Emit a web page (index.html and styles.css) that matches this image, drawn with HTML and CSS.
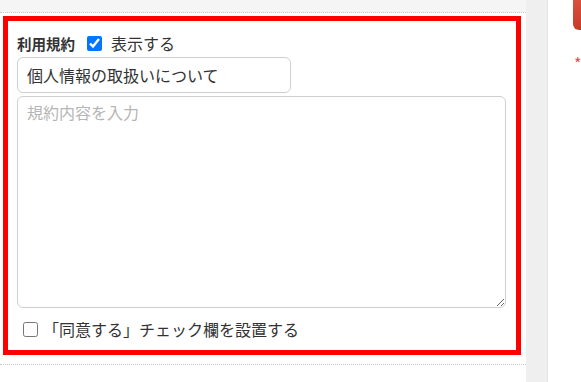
FILE: index.html
```html
<!DOCTYPE html>
<html lang="ja">
<head>
  <meta charset="utf-8">
  <title>利用規約設定</title>
  <link rel="stylesheet" href="styles.css">
</head>
<body>

  <div class="layout">
    <!-- Form column -->
    <div class="main">
      <div class="prev-row"></div>

      <div class="terms-box">
        <div class="terms-head">
          <span class="terms-label">利用規約</span>
          <label class="check">
            <input type="checkbox" checked>
            <span>表示する</span>
          </label>
        </div>
        <input type="text" class="title-input" value="個人情報の取扱いについて">
        <textarea class="body-input" placeholder="規約内容を入力"></textarea>
        <label class="check agree">
          <input type="checkbox">
          <span>「同意する」チェック欄を設置する</span>
        </label>
      </div>

      <div class="next-row"></div>
    </div>

    <div class="gutter"></div>

    <!-- Side panel -->
    <div class="side">
      <div class="side-btn"></div>
      <div class="side-note">*</div>
    </div>
  </div>

</body>
</html>
```

FILE: styles.css
```css
body {
  margin: 0;
  padding: 0;
  font-family: "Noto Sans CJK JP", "Noto Sans", sans-serif;
  color: #333;
  background: #fff;
}

.layout {
  display: flex;
  height: 382px;
  overflow: hidden;
}

/* Form column */
.main {
  width: 526px;
  flex-shrink: 0;
}

.prev-row {
  height: 12px;
  background-color: #f5f5f5;
  border-bottom: 1px dotted #c8c8c8;
}

.terms-box {
  margin: 3px 5px 0 3px;
  border: 5px solid #ff0000;
  padding: 10px 10px 8px 9px;
  display: flex;
  flex-direction: column;
}

.terms-head {
  display: flex;
  align-items: center;
  height: 24px;
}

.terms-label {
  font-size: 14.5px;
  font-weight: bold;
  margin-right: 12px;
}

.check {
  display: flex;
  align-items: center;
  font-size: 16px;
  color: #333;
}

.check input {
  width: 15px;
  height: 15px;
  margin: 0 9px 0 0;
}

.title-input {
  margin-top: 2px;
  width: 274px;
  height: 36px;
  box-sizing: border-box;
  padding: 0 9px;
  border: 1px solid #cfcfcf;
  border-radius: 6px;
  font-family: inherit;
  font-size: 16px;
  color: #333;
}

.body-input {
  margin-top: 3px;
  height: 212px;
  box-sizing: border-box;
  padding: 3px 9px;
  border: 1px solid #cfcfcf;
  border-radius: 6px;
  font-family: inherit;
  font-size: 16px;
  color: #333;
  resize: vertical;
}

.body-input::placeholder {
  color: #b5b5b5;
}

.agree {
  margin-top: 8px;
  height: 26px;
  padding-left: 6px;
}

.agree input {
  margin-right: 5px;
}

.next-row {
  height: 9px;
  border-bottom: 1px dotted #c8c8c8;
}

/* Gutter between columns */
.gutter {
  width: 21px;
  flex-shrink: 0;
  background-color: #efefef;
  border-right: 1px solid #e2e2e2;
}

/* Side panel */
.side {
  flex: 1;
  padding-left: 25px;
}

.side-btn {
  width: 30px;
  height: 30px;
  background: linear-gradient(#d9503d, #c93a28);
  border-radius: 0 0 6px 6px;
}

.side-note {
  margin-top: 23px;
  padding-left: 1px;
  font-size: 16px;
  line-height: 20px;
  color: #d9534f;
}
```
